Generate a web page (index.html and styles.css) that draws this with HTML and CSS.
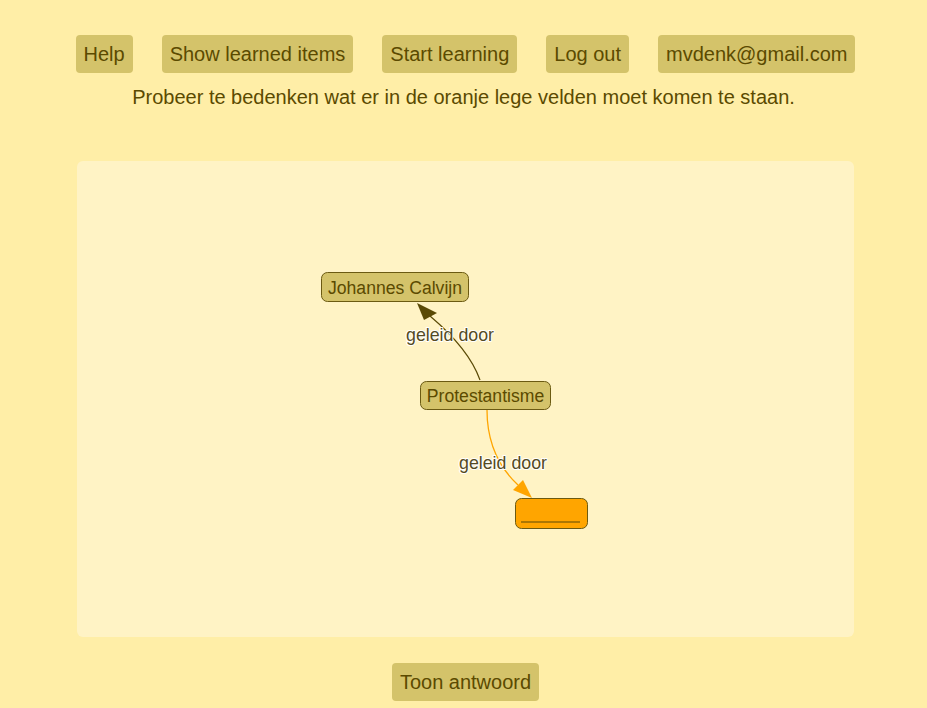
FILE: index.html
```html
<!DOCTYPE html>
<html>
<head>
<meta charset="utf-8">
<link rel="stylesheet" href="styles.css">
</head>
<body>
<div class="page">
  <nav class="menu">
    <button class="btn">Help</button>
    <button class="btn">Show learned items</button>
    <button class="btn">Start learning</button>
    <button class="btn">Log out</button>
    <button class="btn">mvdenk@gmail.com</button>
  </nav>
  <p class="hint">Probeer te bedenken wat er in de oranje lege velden moet komen te staan.</p>
  <div class="panel">
    <svg class="graph" width="777" height="476" viewBox="0 0 777 476">
      <path d="M403,219 Q392,188 353,155" fill="none" stroke="#5a4a06" stroke-width="1.2"/>
      <polygon points="340,142 347,159 360,152" fill="#5a4a06"/>
      <path d="M410,249 Q410,295 441,324" fill="none" stroke="#ffa500" stroke-width="1.3"/>
      <polygon points="455,337 436,329 446,319" fill="#ffa500"/>
      <text class="elabel" x="373" y="180">geleid door</text>
      <text class="elabel" x="426" y="308">geleid door</text>
      <rect x="244.5" y="111.5" width="147" height="29" rx="6" class="node"/>
      <text class="ntext" x="318" y="133">Johannes Calvijn</text>
      <rect x="343.5" y="220.5" width="130" height="28" rx="6" class="node"/>
      <text class="ntext" x="408.5" y="241">Protestantisme</text>
      <rect x="438.5" y="337.5" width="72" height="30" rx="6" class="node blank"/>
      <line x1="444" y1="361" x2="503" y2="361" stroke="#5a4a06" stroke-width="1.2"/>
    </svg>
  </div>
  <div class="bottom">
    <button class="btn">Toon antwoord</button>
  </div>
</div>
</body>
</html>
```
FILE: styles.css
```css
html, body {
  margin: 0;
  padding: 0;
  background: #ffeea7;
  font-family: "Liberation Sans", Arial, sans-serif;
  color: #5b4a00;
}
.page {
  width: 927px;
  height: 708px;
  overflow: hidden;
}
.menu {
  display: flex;
  justify-content: center;
  gap: 29px;
  padding: 35px 0 0 4px;
}
.btn {
  font-family: "Liberation Sans", Arial, sans-serif;
  font-size: 20px;
  color: #5b4a00;
  background: #d4c36a;
  border: none;
  border-radius: 4px;
  padding: 0 8px;
  height: 38px;
  line-height: 38px;
  margin: 0;
}
.hint {
  margin: 13px 0 0 0;
  text-align: center;
  font-size: 20px;
  line-height: 23px;
}
.panel {
  margin: 52px 0 0 77px;
  width: 777px;
  height: 476px;
  background: #fff3c5;
  border-radius: 6px;
}
.graph {
  display: block;
}
.node {
  fill: #d4c36a;
  stroke: #6b5a12;
  stroke-width: 1;
}
.node.blank {
  fill: #ffa500;
}
.ntext {
  font-family: "Liberation Sans", Arial, sans-serif;
  font-size: 17.6px;
  fill: #5b4a00;
  text-anchor: middle;
}
.elabel {
  font-family: "Liberation Sans", Arial, sans-serif;
  font-size: 17.8px;
  fill: #554a22;
  text-anchor: middle;
  stroke: #ffffff;
  stroke-width: 2px;
  paint-order: stroke;
  stroke-linejoin: round;
}
.bottom {
  display: flex;
  justify-content: center;
  margin-top: 26px;
  padding-left: 4px;
}
```
